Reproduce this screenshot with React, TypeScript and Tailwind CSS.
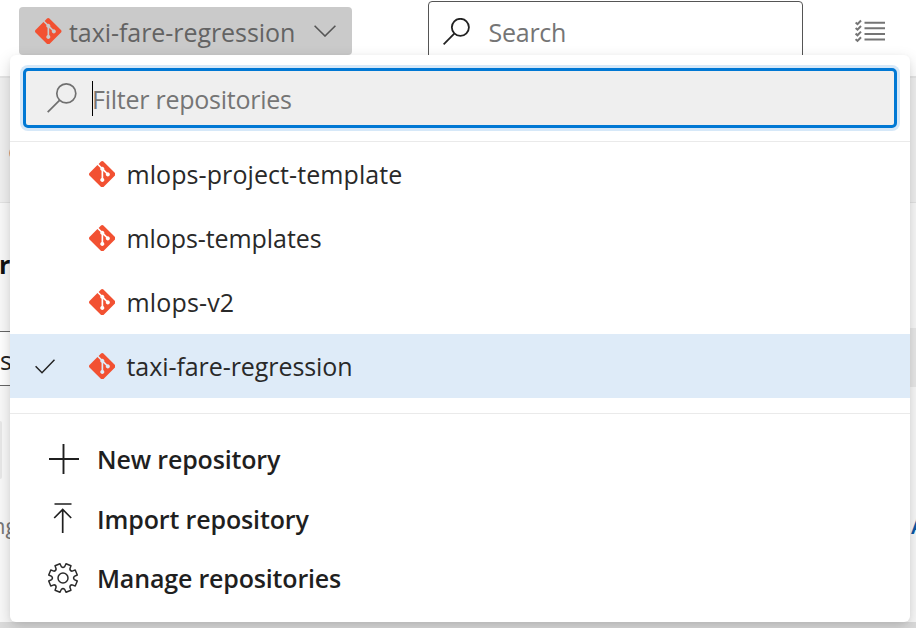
import React from "react";
import { SiGit } from "react-icons/si";

const GitMark = () => <SiGit className="size-[26.5px] shrink-0 text-[#f25132]" />;

const SearchIcon = ({ className }: { className: string }) => (
  <svg viewBox="0 0 30 30" className={className} fill="none" stroke="currentColor">
    <circle cx="19.3" cy="10.4" r="9.5" />
    <path d="M12.5 17.3 L0.7 29.2" />
  </svg>
);

// Eight-tooth cog with a notch at twelve o'clock.
const gearPath = (() => {
  const pts: string[] = [];
  for (let i = 0; i < 8; i++) {
    const base = i * 45 + 22.5;
    const at = (deg: number, r: number) => {
      const a = ((base + deg) * Math.PI) / 180;
      return `${(15 + r * Math.sin(a)).toFixed(2)} ${(15 - r * Math.cos(a)).toFixed(2)}`;
    };
    pts.push(`${i ? "L" : "M"}${at(-14.5, 11.4)} L${at(-10.5, 14.6)} L${at(10.5, 14.6)} L${at(14.5, 11.4)} Q${at(22.5, 9.9)} ${at(30.5, 11.4)}`);
  }
  return pts.join(" ") + "Z";
})();

const PlusIcon = () => (
  <svg viewBox="0 0 30 30" className="size-[30px]" stroke="#1f1f1f" strokeWidth="1.9">
    <path d="M0 15H30M14.500 0V30" />
  </svg>
);
const ImportIcon = () => (
  <svg viewBox="0 0 30 30" className="mt-[-2px] size-[30px]" stroke="#1f1f1f" strokeWidth="1.7" fill="none">
    <path d="M5.5 1H22.500M13.700 30V6.5M5.200 15L13.700 6.5L22.200 15" />
  </svg>
);
const GearIcon = () => (
  <svg viewBox="0 0 30 30" className="-ml-[0.5px] mr-[0.5px] size-[30px]" stroke="#2b2b2b" strokeWidth="1.5" fill="none" strokeLinejoin="round">
    <path d={gearPath} />
    <circle cx="15" cy="15" r="5" />
  </svg>
);

const repositories = [
  { name: "mlops-project-template", track: "tracking-[0.08px]" },
  { name: "mlops-templates", track: "tracking-[-0.08px]" },
  { name: "mlops-v2", track: "tracking-[0.15px]" },
  { name: "taxi-fare-regression", track: "tracking-[-0.07px]", selected: true },
];

const actions = [
  { label: "New repository", icon: <PlusIcon />, row: "h-[60px]", track: "tracking-[-0.15px]" },
  { label: "Import repository", icon: <ImportIcon />, row: "h-[60px]", track: "tracking-[-0.13px]" },
  { label: "Manage repositories", icon: <GearIcon />, row: "h-[58px]", track: "tracking-[-0.17px]" },
];

function Header() {
  return (
    <header className="flex h-[78px] items-start border-b-2 border-[#e5e5e5] bg-white pl-[19px]">
      <button className="mt-[7px] flex h-12 w-[333px] items-center rounded-[4px] bg-[#cacaca] pl-4 text-[#636363]">
        <GitMark />
        <span className="ml-[7.5px] mt-px w-[245px] whitespace-nowrap text-left tracking-[-0.06px]">taxi-fare-regression</span>
        <svg viewBox="0 0 22 12" className="h-3 w-[22px]" fill="none" stroke="#555" strokeWidth="1.6">
          <path d="M0.6 0.8L11 11L21.4 0.800" />
        </svg>
      </button>
      <div className="ml-[76px] mt-px flex h-[62px] w-[375px] items-center rounded-[4px] border border-[#555] pl-[14px] text-[#757575]">
        <SearchIcon className="mb-[2px] size-[27px] stroke-[2px] text-[#222]" />
        <span className="-mt-px ml-[18.5px] tracking-[-0.25px]">Search</span>
      </div>
      <svg viewBox="0 0 30 24" className="ml-[52px] mt-[19px] h-6 w-[30px]" fill="none" stroke="#757575" strokeWidth="2">
        <path d="M9.500 3.800H30M9.500 9.300H30M9.500 14.900H30M9.500 20.400H30" />
        <path d="M.6 3.500L2.500 5.200L6 1.500M.6 9L2.500 10.700L6 7M.6 14.600L2.500 16.300L6 12.600M.6 20.200L2.500 21.900L6 18.200" />
      </svg>
    </header>
  );
}

function PageBehind() {
  return (
    <>
      <div className="h-[124.5px] border-b border-[#e3e3e3] bg-[#f0f0f0] pl-[9px] pt-[68px]">
        <div className="h-[14px] w-[14px] rounded-full border-2 border-[#e0a070]" />
      </div>
      <div className="flex h-[419.5px] justify-between overflow-hidden bg-[#f9f9f9]">
        <div className="w-[100px]">
          <div className="mt-[43.5px] h-[36px] -indent-[1px] font-bold leading-[36px] text-[#111]">r</div>
          <div className="mt-[49px] h-[55px] w-[100px] border-y border-[#666] bg-white leading-[56px] text-[#222]">s</div>
          <div className="mt-[35px] h-[58px] w-[2px] rounded-r-[3px] bg-[#e8e8e8]" />
          <div className="mt-[28px] -indent-[8px] text-[22px] leading-[36px] text-[#777]">ng</div>
        </div>
        <div className="w-[20px]">
          <div className="mt-[125.5px] h-[59px] bg-[#e9e9e9]" />
          <div className="mt-[120px] pl-[15px] text-[22px] font-semibold leading-[36px] text-[#0c5aa6]">A</div>
        </div>
      </div>
      <div className="h-[6px] bg-[#dcdcdc]" />
    </>
  );
}

function RepositoryMenu() {
  return (
    <div className="absolute left-[10px] top-[55px] flex h-[567px] w-[900px] flex-col rounded-[6px] bg-white shadow-[0_6px_16px_rgba(0,0,0,0.17),0_1px_4px_rgba(0,0,0,0.04)]">
      <div className="mx-[13px] mt-[13px] flex h-[60px] items-center rounded-[5px] border-[3px] border-[#0078d4] bg-[#efefef] pl-[20.5px] text-[#757575] shadow-[0_0_0_3px_#d6e8f8]">
        <SearchIcon className="mb-[1px] size-[30px] stroke-[1.700px] text-[#707070]" />
        <span className="ml-[15.5px] h-[35px] w-px bg-black" />
        <span className="-ml-px mt-px tracking-[-0.25px]">Filter repositories</span>
      </div>
      <div className="mt-[13px] h-px bg-[#eaeaea]" />
      <ul>
        {repositories.map((repo) => (
          <li key={repo.name} className={`flex h-16 items-center pl-[25px] text-[#292929] ${repo.selected ? "bg-[#deebf8]" : ""}`}>
            <span className="w-[53.5px]">
              {repo.selected && (
                <svg viewBox="0 0 20 15" className="h-[15px] w-5" fill="none" stroke="#222" strokeWidth="1.5">
                  <path d="M0.6 7.300L7 13.700L19.500 0.800" />
                </svg>
              )}
            </span>
            <GitMark />
            <span className={`ml-[11.5px] whitespace-nowrap ${repo.track}`}>{repo.name}</span>
          </li>
        ))}
      </ul>
      <div className="mt-[15px] h-px bg-[#eaeaea]" />
      <ul className="mt-[15px] font-semibold text-[#1f1f1f]">
        {actions.map((a) => (
          <li key={a.label} className={`flex items-center pl-[38.500px] ${a.row}`}>
            {a.icon}
            <span className={`ml-[18.500px] mt-[-1px] whitespace-nowrap ${a.track}`}>{a.label}</span>
          </li>
        ))}
      </ul>
    </div>
  );
}

export default function App() {
  return (
    <main className="relative h-[628px] w-[916px] overflow-hidden bg-white font-['Open_Sans','Noto_Sans',sans-serif] text-[25px] leading-[34px]">
      <Header />
      <PageBehind />
      <RepositoryMenu />
    </main>
  );
}
